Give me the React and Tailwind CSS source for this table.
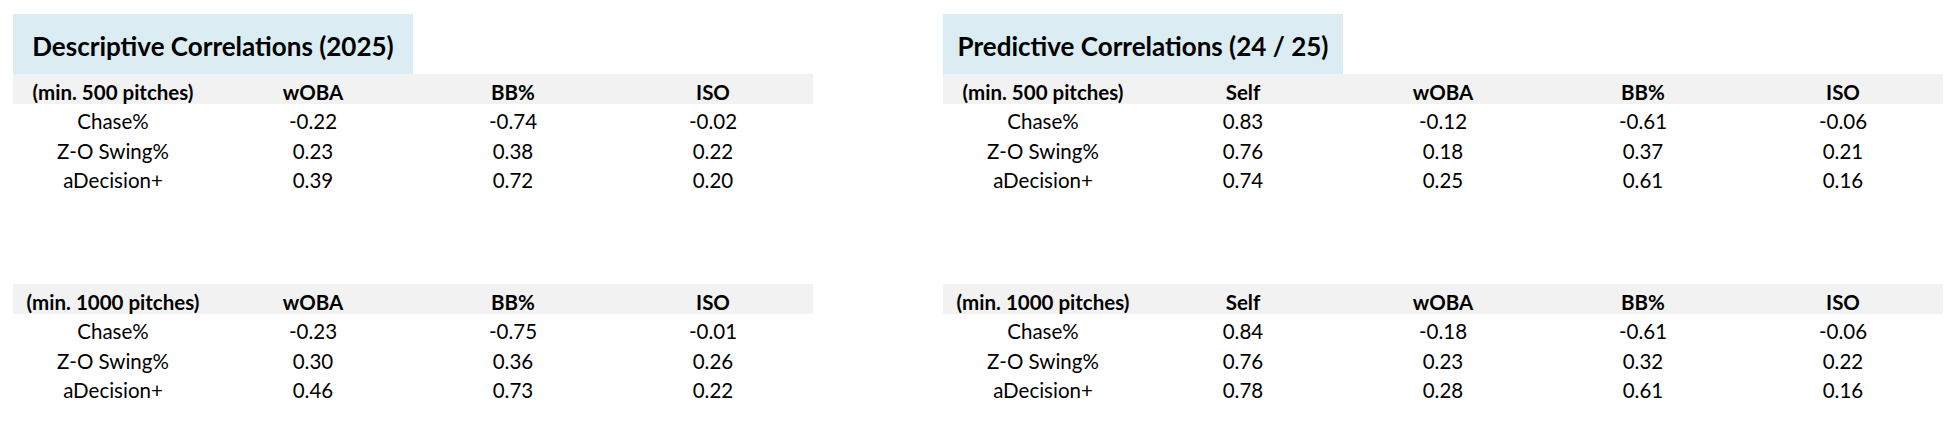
const descriptive = {
  title: 'Descriptive Correlations (2025)',
  cols: ['wOBA', 'BB%', 'ISO'],
  tables: [
    {
      label: '(min. 500 pitches)',
      rows: [
        ['Chase%', '-0.22', '-0.74', '-0.02'],
        ['Z-O Swing%', '0.23', '0.38', '0.22'],
        ['aDecision+', '0.39', '0.72', '0.20'],
      ],
    },
    {
      label: '(min. 1000 pitches)',
      rows: [
        ['Chase%', '-0.23', '-0.75', '-0.01'],
        ['Z-O Swing%', '0.30', '0.36', '0.26'],
        ['aDecision+', '0.46', '0.73', '0.22'],
      ],
    },
  ],
};

const predictive = {
  title: 'Predictive Correlations (24 / 25)',
  cols: ['Self', 'wOBA', 'BB%', 'ISO'],
  tables: [
    {
      label: '(min. 500 pitches)',
      rows: [
        ['Chase%', '0.83', '-0.12', '-0.61', '-0.06'],
        ['Z-O Swing%', '0.76', '0.18', '0.37', '0.21'],
        ['aDecision+', '0.74', '0.25', '0.61', '0.16'],
      ],
    },
    {
      label: '(min. 1000 pitches)',
      rows: [
        ['Chase%', '0.84', '-0.18', '-0.61', '-0.06'],
        ['Z-O Swing%', '0.76', '0.23', '0.32', '0.22'],
        ['aDecision+', '0.78', '0.28', '0.61', '0.16'],
      ],
    },
  ],
};

const Cell = ({ children, bold }) => (
  <div className={`w-[200px] flex justify-center items-center pt-[6px] ${bold ? 'font-bold' : ''}`}>
    {children}
  </div>
);

const Table = ({ label, cols, rows }) => (
  <div>
    <div className="flex h-[30px] bg-[#f2f2f2]">
      <Cell bold>{label}</Cell>
      {cols.map((c) => (
        <Cell key={c} bold>{c}</Cell>
      ))}
    </div>
    {rows.map((r) => (
      <div key={r[0]} className="flex h-[29.5px]">
        {r.map((v, i) => (
          <Cell key={i}>{v}</Cell>
        ))}
      </div>
    ))}
  </div>
);

const Block = ({ data }) => (
  <div className="flex flex-col">
    <div className="w-[400px] h-[60px] bg-[#dbecf2] flex items-center justify-center pt-[4px] text-[26px] font-bold">
      {data.title}
    </div>
    <Table label={data.tables[0].label} cols={data.cols} rows={data.tables[0].rows} />
    <div className="h-[91.5px]" />
    <Table label={data.tables[1].label} cols={data.cols} rows={data.tables[1].rows} />
  </div>
);

const App = () => {
  return (
    <div
      className="w-[1960px] h-[424px] bg-white text-black text-[20.5px] flex gap-[130px] pl-[13px] pt-[14px]"
      style={{ fontFamily: 'Lato, "Open Sans", sans-serif' }}
    >
      <Block data={descriptive} />
      <Block data={predictive} />
    </div>
  );
};

export default App;
